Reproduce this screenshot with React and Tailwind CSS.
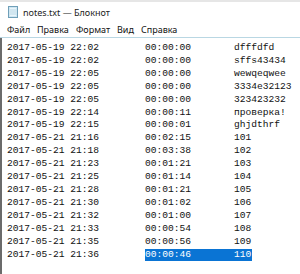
const rows = [
  ['2017-05-19 22:02', '00:00:00', 'dfffdfd'],
  ['2017-05-19 22:02', '00:00:00', 'sffs43434'],
  ['2017-05-19 22:05', '00:00:00', 'wewqeqwee'],
  ['2017-05-19 22:05', '00:00:00', '3334e32123'],
  ['2017-05-19 22:05', '00:00:00', '323423232'],
  ['2017-05-19 22:14', '00:00:11', 'проверка!'],
  ['2017-05-19 22:15', '00:00:01', 'ghjdthrf'],
  ['2017-05-21 21:16', '00:02:15', '101'],
  ['2017-05-21 21:18', '00:03:38', '102'],
  ['2017-05-21 21:23', '00:01:21', '103'],
  ['2017-05-21 21:25', '00:01:14', '104'],
  ['2017-05-21 21:28', '00:01:21', '105'],
  ['2017-05-21 21:30', '00:01:02', '106'],
  ['2017-05-21 21:32', '00:01:00', '107'],
  ['2017-05-21 21:33', '00:00:54', '108'],
  ['2017-05-21 21:35', '00:00:56', '109'],
  ['2017-05-21 21:36', '00:00:46', '110'],
];

function NoteIcon() {
  return (
    <svg width="10" height="12" viewBox="0 0 10 12">
      <rect x="0.5" y="0.5" width="9" height="11" fill="#cfe6f2" stroke="#6f9fb8" />
      <rect x="2" y="2" width="6" height="8" fill="#e9f5fb" />
      <path d="M2 4h6M2 6h6M2 8h6" stroke="#9cc3d6" strokeWidth="0.6" />
    </svg>
  );
}

export default function App() {
  return (
    <div className="w-[300px] h-[274px] bg-white overflow-hidden flex flex-col" style={{ fontFamily: '"Noto Sans", "Liberation Sans", sans-serif' }}>
      <div className="h-[2px] bg-[#e6e6e6]" />
      <div className="h-[20px] flex items-center pl-[8px] gap-[5px]">
        <NoteIcon />
        <span className="text-[9px] text-[#222] leading-none">notes.txt — Блокнот</span>
      </div>
      <div className="h-[15px] flex items-center pl-[7px] text-[9px] text-[#111] leading-none">
        <span className="w-[30px]">Файл</span>
        <span className="w-[39px]">Правка</span>
        <span className="w-[41px]">Формат</span>
        <span className="w-[24px]">Вид</span>
        <span>Справка</span>
      </div>
      <div className="h-[1px] bg-[#b9d7e3]" />
      <div className="flex-1 border-l-[2px] border-[#6b6b6b] pt-[4px] pl-[5px]">
        <div className="text-[9.6px] leading-[12.9px] text-[#111]" style={{ fontFamily: '"Liberation Mono", monospace' }}>
          {rows.map((r, i) => {
            const sel = i === rows.length - 1;
            return (
              <div key={i} className="flex whitespace-pre">
                <span className="w-[138px]">{r[0]}</span>
                <span className={sel ? 'w-[89px] bg-[#0a74d4] text-white' : 'w-[89px]'}>{r[1]}</span>
                <span className={sel ? 'bg-[#0a74d4] text-white pr-[1px]' : ''}>{r[2]}</span>
              </div>
            );
          })}
        </div>
      </div>
    </div>
  );
}
